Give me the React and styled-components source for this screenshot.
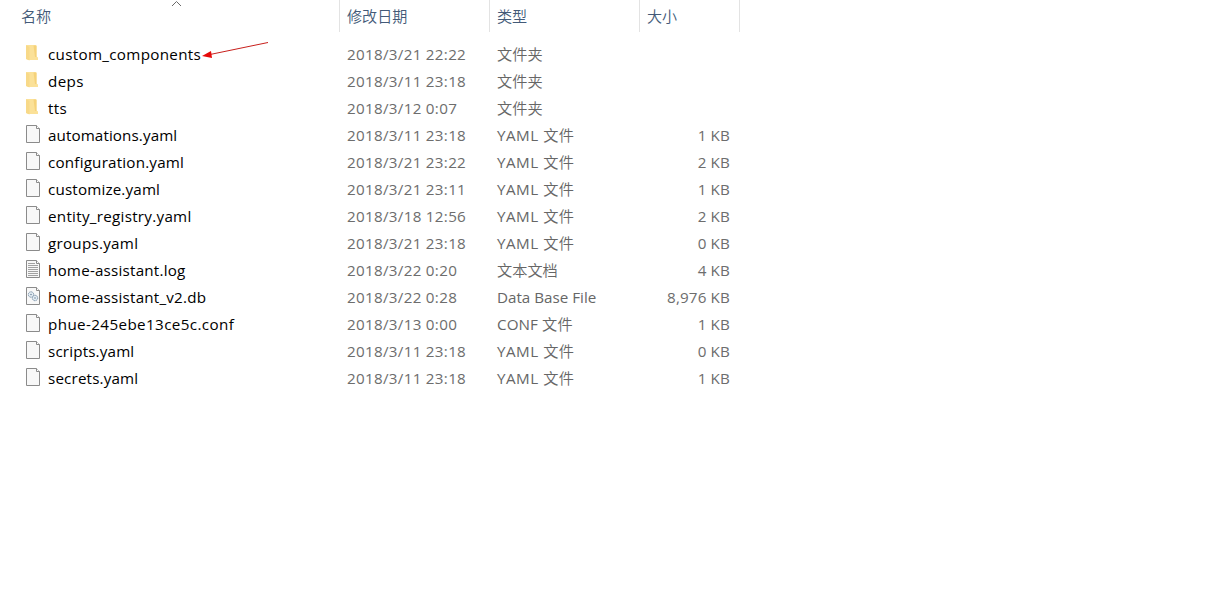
import styled, { createGlobalStyle } from 'styled-components';

const GlobalStyle = createGlobalStyle`
  body {
    margin: 0;
    background: #fff;
    overflow: hidden;
  }
`;

const Container = styled.div`
  width: 1206px;
  height: 598px;
  background: #fff;
  font-family: 'Open Sans', 'Noto Sans CJK SC DemiLight', 'Noto Sans CJK SC Light', 'Noto Sans CJK SC', sans-serif;
  font-size: 15.2px;
  color: #6d6d6d;
`;

const HeaderRow = styled.div`
  display: grid;
  grid-template-columns: 340px 150px 150px 100px;
  height: 32px;
  margin-bottom: 9px;
  font-size: 15.1px;
`;

const HeaderCell = styled.div`
  position: relative;
  box-sizing: border-box;
  padding-left: ${({ $first }) => ($first ? '21px' : '7px')};
  border-right: 1px solid #e3e3e3;
  line-height: 32px;
  color: #435a78;
`;

const SortArrow = styled.svg`
  position: absolute;
  top: 0;
  left: 171px;
`;

const Row = styled.div`
  display: grid;
  grid-template-columns: 347px 150px 143px 90px;
  height: 27px;
  line-height: 27px;
  white-space: pre;
`;

const NameCell = styled.div`
  display: flex;
  position: relative;
  padding-left: 25px;
  color: #000;
`;

const IconBox = styled.div`
  width: 23px;

  svg {
    display: block;
    margin-top: 3px;
  }
`;

const FileName = styled.span`
  letter-spacing: ${({ $track }) => ($track || 0) + 0.16}px;
`;

const DateCell = styled.div`
  letter-spacing: 0.3px;
`;

const TypeCell = styled.div`
  color: #666;
  letter-spacing: ${({ $track }) => $track || 0}px;
`;

const SizeCell = styled.div`
  text-align: right;
  letter-spacing: 0.15px;
`;

const Pointer = styled.svg`
  position: absolute;
  top: 0;
  left: 200px;
`;

const FolderIcon = () => (
  <svg width='16' height='20' viewBox='0 0 16 20'>
    <path d='M1 1h9.5l1 1v10.5l1.5 1v2.5H4l-3-1z' fill='#fbe198' />
    <path d='M1 1.5l3.5 1.2v13.8l-3.5-1.5z' fill='#f8d988' />
    <path d='M8.5 1.5h3v11.5h-1.5z' fill='#f5d27a' />
  </svg>
);

const PageIcon = ({ kind }) => (
  <svg width='16' height='20' viewBox='0 0 16 20'>
    <path d='M1.5 .5h10l3 3v14h-13z' fill='#f8f8f8' stroke='#8b8b8b' />
    <path d='M11.5 .5v3h3' fill='#fff' stroke='#8b8b8b' />
    {kind === 'text' && (
      <path d='M3 3.5h7M3 5.5h10M3 7.5h10M3 9.5h10M3 11.5h10M3 13.5h10M3 15.5h10' stroke='#a2a2a2' />
    )}
    {kind === 'gear' && (
      <g fill='#e4edf4'>
        <circle cx='6' cy='7.5' r='2.7' stroke='#7e95aa' strokeDasharray='1.5 .6' />
        <circle cx='10' cy='11' r='2.7' stroke='#7e95aa' strokeDasharray='1.5 .6' />
        <circle cx='6' cy='7.5' r='.8' fill='#6f879e' />
        <circle cx='10' cy='11' r='.8' fill='#6f879e' />
      </g>
    )}
  </svg>
);

const files = [
  { name: 'custom_components', date: '2018/3/21 22:22', type: '文件夹', kind: 'folder', track: 0.15, marked: true },
  { name: 'deps', date: '2018/3/11 23:18', type: '文件夹', kind: 'folder', track: 0.2 },
  { name: 'tts', date: '2018/3/12 0:07', type: '文件夹', kind: 'folder', track: 0.15 },
  { name: 'automations.yaml', date: '2018/3/11 23:18', type: 'YAML 文件', size: '1 KB', track: -0.06 },
  { name: 'configuration.yaml', date: '2018/3/21 23:22', type: 'YAML 文件', size: '2 KB', track: 0.04 },
  { name: 'customize.yaml', date: '2018/3/21 23:11', type: 'YAML 文件', size: '1 KB' },
  { name: 'entity_registry.yaml', date: '2018/3/18 12:56', type: 'YAML 文件', size: '2 KB', track: 0.12 },
  { name: 'groups.yaml', date: '2018/3/21 23:18', type: 'YAML 文件', size: '0 KB', track: 0.1 },
  { name: 'home-assistant.log', date: '2018/3/22 0:20', type: '文本文档', size: '4 KB', kind: 'text', track: 0.05 },
  { name: 'home-assistant_v2.db', date: '2018/3/22 0:28', type: 'Data Base File', size: '8,976 KB', kind: 'gear', track: 0.05 },
  { name: 'phue-245ebe13ce5c.conf', date: '2018/3/13 0:00', type: 'CONF 文件', size: '1 KB', track: 0.23 },
  { name: 'scripts.yaml', date: '2018/3/11 23:18', type: 'YAML 文件', size: '0 KB' },
  { name: 'secrets.yaml', date: '2018/3/11 23:18', type: 'YAML 文件', size: '1 KB' },
];

// extra spacing for the types that mix latin and chinese
const typeTrack = { 'YAML 文件': 0.5, 'CONF 文件': 0.1 };

function FileRow ({ file }) {
  return (
    <Row>
      <NameCell>
        <IconBox>
          {file.kind === 'folder' ? <FolderIcon /> : <PageIcon kind={file.kind} />}
        </IconBox>
        <FileName $track={file.track}>{file.name}</FileName>
        {file.marked
          ? (
            <Pointer width='72' height='22' viewBox='0 0 72 22'>
              <path d='M10 13.5L68 1.5' stroke='#c8201c' />
              <path d='M2 15L11 10l1 7z' fill='#e60a0a' />
            </Pointer>
            )
          : null}
      </NameCell>
      <DateCell>{file.date}</DateCell>
      <TypeCell $track={typeTrack[file.type]}>{file.type}</TypeCell>
      <SizeCell>{file.size}</SizeCell>
    </Row>
  );
}

function App () {
  return (
    <>
      <GlobalStyle />
      <Container>
        <HeaderRow>
          <HeaderCell $first>
            名称
            <SortArrow width='12' height='7' viewBox='0 0 12 7'>
              <path d='M1 6L5.5 1.5L10 6' fill='none' stroke='#6a6a6a' />
            </SortArrow>
          </HeaderCell>
          <HeaderCell>修改日期</HeaderCell>
          <HeaderCell>类型</HeaderCell>
          <HeaderCell>大小</HeaderCell>
        </HeaderRow>
        {files.map((file) => (
          <FileRow key={file.name} file={file} />
        ))}
      </Container>
    </>
  );
}

export default App;
